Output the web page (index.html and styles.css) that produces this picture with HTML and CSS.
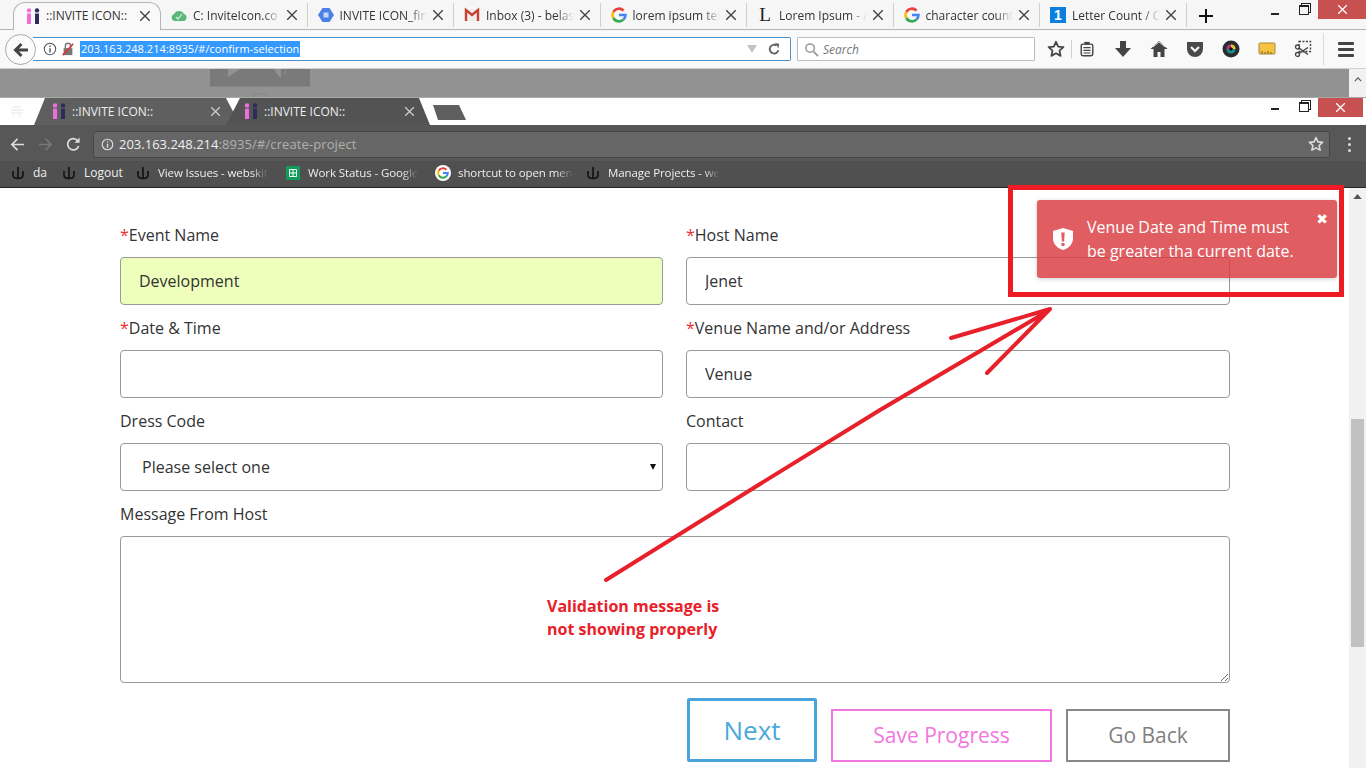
FILE: index.html
```html
<!DOCTYPE html>
<html lang="en">

<head>
    <meta charset="UTF-8">
    <meta name="viewport" content="width=device-width, initial-scale=1.0">
    <title>Validation message bug</title>
    <link rel="stylesheet" href="styles.css">
</head>

<body>
    <!-- shared icons -->
    <svg class="sprites" aria-hidden="true">
        <symbol id="i-ii" viewBox="0 0 16 16">
            <circle cx="4" cy="2.4" r="2.2" fill="#ee6fdc" />
            <rect x="2" y="5.5" width="4" height="10.5" fill="#ee6fdc" />
            <circle cx="12" cy="2.4" r="2.2" fill="#2d2a5c" />
            <rect x="10" y="5.5" width="4" height="10.5" fill="#2d2a5c" />
        </symbol>
        <symbol id="i-x" viewBox="0 0 10 10">
            <path d="M0 0L10 10M10 0L0 10" fill="none" stroke="currentColor" stroke-width="1.4" />
        </symbol>
        <symbol id="i-g" viewBox="0 0 16 16">
            <g fill="none" stroke-width="2.6">
                <path d="M12.6 3.6A6.5 6.5 0 0 0 2.3 5" stroke="#ea4335" />
                <path d="M2.3 5a6.5 6.5 0 0 0 0 6" stroke="#fbbc05" />
                <path d="M2.3 11A6.5 6.5 0 0 0 12.6 12.4" stroke="#34a853" />
                <path d="M12.6 12.4A6.5 6.5 0 0 0 14.5 8H8" stroke="#4285f4" />
            </g>
        </symbol>
        <symbol id="i-star" viewBox="0 0 18 18">
            <path d="M9 1.8l2.2 4.8 5.2.6-3.900 3.500 1.100 5.200L9 13.300l-4.600 2.600 1.100-5.200-3.900-3.500 5.200-.6z" fill="none" stroke="currentColor" stroke-width="1.800" stroke-linejoin="round" />
        </symbol>
        <symbol id="i-mark" viewBox="0 0 14 14">
            <path d="M2 5v4c0 2.500 2 3.500 5 3.500s5-1 5-3.500V5M7 1v11.500" fill="none" stroke="#111" stroke-width="1.600" />
        </symbol>
    </svg>

    <!-- outer browser -->
    <div class="ff-tabs">
        <div class="ff-tab active">
            <svg class="favicon"><use href="#i-ii" /></svg>
            <span class="ff-title">::INVITE ICON::</span>
            <svg class="ff-close"><use href="#i-x" /></svg>
        </div>
        <div class="ff-tab">
            <svg class="favicon" viewBox="0 0 16 16">
                <path d="M4 14a3.500 3.500 0 0 1-1-6.800A5.500 5.500 0 0 1 13 7a3.600 3.600 0 0 1-.5 7z" fill="#5cb87a" />
                <path d="M5 10l2 2 4-5" fill="none" stroke="#d8f0de" stroke-width="1.200" />
            </svg>
            <span class="ff-title">C: InviteIcon.co</span>
            <svg class="ff-close"><use href="#i-x" /></svg>
        </div>
        <div class="ff-tab">
            <svg class="favicon" viewBox="0 0 16 16">
                <path d="M4.500 1h7L16 8l-4.500 7h-7L0 8z" fill="#4a80e8" />
                <rect x="5.500" y="5.500" width="5" height="5" fill="#c5d8fb" />
            </svg>
            <span class="ff-title">INVITE ICON_fin</span>
            <svg class="ff-close"><use href="#i-x" /></svg>
        </div>
        <div class="ff-tab">
            <svg class="favicon" viewBox="0 0 16 16">
                <rect x="1" y="2" width="14" height="12" fill="#eee" />
                <path d="M2 14V3l6 5 6-5v11" fill="none" stroke="#c8402f" stroke-width="2.400" />
            </svg>
            <span class="ff-title">Inbox (3) - belas</span>
            <svg class="ff-close"><use href="#i-x" /></svg>
        </div>
        <div class="ff-tab">
            <svg class="favicon"><use href="#i-g" /></svg>
            <span class="ff-title">lorem ipsum tex</span>
            <svg class="ff-close"><use href="#i-x" /></svg>
        </div>
        <div class="ff-tab">
            <span class="favicon letter">L</span>
            <span class="ff-title">Lorem Ipsum - A</span>
            <svg class="ff-close"><use href="#i-x" /></svg>
        </div>
        <div class="ff-tab">
            <svg class="favicon"><use href="#i-g" /></svg>
            <span class="ff-title">character count</span>
            <svg class="ff-close"><use href="#i-x" /></svg>
        </div>
        <div class="ff-tab">
            <span class="favicon one">1</span>
            <span class="ff-title">Letter Count / C</span>
            <svg class="ff-close"><use href="#i-x" /></svg>
        </div>
        <svg class="ff-plus" viewBox="0 0 16 16">
            <path d="M8 1v14M1 8h14" stroke="#111" stroke-width="2" />
        </svg>
        <div class="win-btns ff-win">
            <span class="win-min"></span>
            <span class="win-max"></span>
            <span class="win-close"><svg class="win-x"><use href="#i-x" /></svg></span>
        </div>
    </div>

    <div class="ff-nav">
        <div class="ff-back">
            <svg viewBox="0 0 18 18" width="18" height="18">
                <path d="M16 9H4M9.500 3L3.500 9l6 6" fill="none" stroke="#444" stroke-width="3" />
            </svg>
        </div>
        <div class="ff-url">
            <svg class="url-icon" viewBox="0 0 16 16">
                <circle cx="8" cy="8" r="6.500" fill="none" stroke="#555" stroke-width="1.200" />
                <path d="M8 7v5M8 4v1.600" stroke="#555" stroke-width="1.600" />
            </svg>
            <svg class="url-icon" viewBox="0 0 16 16">
                <rect x="3" y="7" width="10" height="8" fill="#777" />
                <path d="M5 7V4.500a3 3 0 0 1 6 0V7" fill="none" stroke="#777" stroke-width="1.600" />
                <path d="M2 15L14 2" stroke="#d33" stroke-width="1.800" />
            </svg>
            <span class="url-text">203.163.248.214:8935/#/confirm-selection</span>
            <span class="url-drop"></span>
            <svg class="url-reload" viewBox="0 0 16 16">
                <path d="M13 9.500A5 5 0 1 1 11 4" fill="none" stroke="#666" stroke-width="2.200" />
                <path d="M9 1l5 1-1 5z" fill="#666" />
            </svg>
        </div>
        <div class="ff-search">
            <svg viewBox="0 0 16 16" width="15" height="15">
                <circle cx="6.500" cy="6.500" r="4.500" fill="none" stroke="#999" stroke-width="1.600" />
                <path d="M10 10l5 5" stroke="#999" stroke-width="2" />
            </svg>
            <span>Search</span>
        </div>
        <div class="ff-tools">
            <div class="tool tool-star"><svg width="18" height="18"><use href="#i-star" /></svg></div>
            <div class="tool tool-clip">
                <svg viewBox="0 0 18 18" width="16" height="18">
                    <rect x="2.500" y="3.500" width="13" height="13" rx="2" fill="#f9f9f9" stroke="#444" stroke-width="1.600" />
                    <rect x="6" y="1" width="6" height="3" fill="#444" />
                    <path d="M5 7.500h8M5 10.500h8M5 13.500h8" stroke="#444" stroke-width="1.400" />
                </svg>
            </div>
            <div class="tool">
                <svg viewBox="0 0 18 18" width="18" height="18"><path d="M6 1h6v7h5l-8 9-8-9h5z" fill="#444" /></svg>
            </div>
            <div class="tool">
                <svg viewBox="0 0 18 18" width="18" height="18">
                    <path d="M9 1L0.500 9H3.500v8H7.500v-5h3v5h4V9h3z" fill="#444" />
                    <path d="M3 7l6-5 6 5" fill="none" stroke="#f9f9f9" stroke-width=".8" />
                </svg>
            </div>
            <div class="tool">
                <svg viewBox="0 0 18 18" width="18" height="18">
                    <path d="M1 2h16v7a8 8 0 0 1-16 0z" fill="#4a4a4a" />
                    <path d="M5 7l4 4 4-4" fill="none" stroke="#f9f9f9" stroke-width="2.200" />
                </svg>
            </div>
            <div class="tool">
                <svg viewBox="0 0 18 18" width="18" height="18">
                    <circle cx="9" cy="9" r="8.500" fill="#2b2b2b" />
                    <circle cx="9" cy="9" r="4.500" fill="#1a8f8a" />
                    <path d="M9 4.500a4.500 4.500 0 0 1 4.500 4.500H9z" fill="#e5d22e" />
                    <path d="M4.500 9A4.500 4.500 0 0 1 9 4.500V9z" fill="#c2298e" />
                    <circle cx="9" cy="9" r="1.800" fill="#111" />
                </svg>
            </div>
            <div class="tool">
                <svg viewBox="0 0 18 18" width="18" height="18">
                    <rect x="1" y="3" width="16" height="11" rx="1" fill="#f5c242" stroke="#a98a3a" />
                    <path d="M4 14v-3M7 14v-2M10 14v-3M13 14v-2" stroke="#7a6320" />
                </svg>
            </div>
            <div class="tool">
                <svg viewBox="0 0 18 18" width="18" height="18">
                    <rect x="5" y="1.500" width="11.500" height="10" fill="none" stroke="#444" stroke-width="1.400" stroke-dasharray="2 1.500" />
                    <circle cx="3.500" cy="14.500" r="2" fill="none" stroke="#444" stroke-width="1.300" />
                    <circle cx="3.500" cy="7" r="2" fill="none" stroke="#444" stroke-width="1.300" />
                    <path d="M5 13.500L14 7.500M5 8L14 14.500" stroke="#444" stroke-width="1.500" />
                </svg>
            </div>
            <div class="tool-menu">
                <span></span><span></span><span></span>
            </div>
        </div>
    </div>

    <div class="strip">
        <div class="strip-main">
            <div class="player">
                <svg viewBox="0 0 100 18" width="100" height="18">
                    <path d="M18 0h12l-12 8z" fill="#929292" />
                    <path d="M64 0h7v9l-4-4z" fill="#929292" />
                    <path d="M74 0c2 2 2 4 0 6" fill="none" stroke="#929292" />
                </svg>
            </div>
            <div class="player-grip"></div>
        </div>
        <div class="strip-bar">
            <svg viewBox="0 0 10 6" width="8" height="5"><path d="M1 5l4-4 4 4" fill="none" stroke="#555" stroke-width="1.400" /></svg>
        </div>
    </div>

    <!-- inner browser -->
    <div class="ch-tabs">
        <svg class="ch-logo" viewBox="0 0 14 14">
            <path d="M3 2h8M1 5h12M1 8h12M3 11h2M9 11h2" stroke="#eee" stroke-width="1.500" />
        </svg>
        <div class="ch-tab ch-tab-back">
            <svg class="favicon"><use href="#i-ii" /></svg>
            <span class="ch-title">::INVITE ICON::</span>
            <svg class="ch-close"><use href="#i-x" /></svg>
        </div>
        <div class="ch-tab ch-tab-front">
            <svg class="favicon"><use href="#i-ii" /></svg>
            <span class="ch-title">::INVITE ICON::</span>
            <svg class="ch-close"><use href="#i-x" /></svg>
        </div>
        <div class="ch-new"></div>
        <div class="win-btns ch-win">
            <span class="win-min"></span>
            <span class="win-max"></span>
            <span class="win-close"><svg class="win-x"><use href="#i-x" /></svg></span>
        </div>
    </div>

    <div class="ch-nav">
        <svg class="ch-btn" viewBox="0 0 16 16">
            <path d="M15 8H2M8 2L2 8l6 6" fill="none" stroke="#ddd" stroke-width="1.800" />
        </svg>
        <svg class="ch-btn" viewBox="0 0 16 16">
            <path d="M1 8h13M8 2l6 6-6 6" fill="none" stroke="#777" stroke-width="1.800" />
        </svg>
        <svg class="ch-btn" viewBox="0 0 16 16">
            <path d="M13.500 9.500A6 6 0 1 1 12 3.500" fill="none" stroke="#ddd" stroke-width="1.800" />
            <path d="M9 6h5.500V0.500z" fill="#ddd" />
        </svg>
        <div class="omnibox">
            <svg class="omni-info" viewBox="0 0 16 16">
                <circle cx="8" cy="8" r="6.500" fill="none" stroke="#ddd" stroke-width="1.400" />
                <path d="M8 7v5M8 4v1.600" stroke="#ddd" stroke-width="1.600" />
            </svg>
            <span class="omni-host">203.163.248.214</span><span class="omni-path">:8935/#/create-project</span>
            <svg class="omni-star"><use href="#i-star" /></svg>
        </div>
        <div class="ch-more"><span></span><span></span><span></span></div>
    </div>

    <div class="ch-marks">
        <div class="mark mark-short"><svg class="mark-icon"><use href="#i-mark" /></svg><span>da</span></div>
        <div class="mark mark-logout"><svg class="mark-icon"><use href="#i-mark" /></svg><span>Logout</span></div>
        <div class="mark"><svg class="mark-icon"><use href="#i-mark" /></svg><span class="mark-fade">View Issues - webskit</span></div>
        <div class="mark">
            <svg class="mark-icon" viewBox="0 0 14 14">
                <rect width="14" height="14" rx="1" fill="#0f9d58" />
                <path d="M3.500 3.500h7v7h-7zM3.500 7h7M7 3.500v7" fill="none" stroke="#fff" />
            </svg>
            <span class="mark-fade">Work Status - Google</span>
        </div>
        <div class="mark">
            <span class="mark-g"><svg width="12" height="12"><use href="#i-g" /></svg></span>
            <span class="mark-fade">shortcut to open men</span>
        </div>
        <div class="mark"><svg class="mark-icon"><use href="#i-mark" /></svg><span class="mark-fade">Manage Projects - we</span></div>
    </div>

    <!-- page in the inner browser -->
    <div class="page">
        <main class="content">
            <form class="form-grid">
                <div class="field">
                    <label><em>*</em>Event Name</label>
                    <input class="autofill" type="text" value="Development">
                </div>
                <div class="field">
                    <label><em>*</em>Host Name</label>
                    <input type="text" value="Jenet">
                </div>
                <div class="field">
                    <label><em>*</em>Date &amp; Time</label>
                    <input type="text">
                </div>
                <div class="field">
                    <label><em>*</em>Venue Name and/or Address</label>
                    <input type="text" value="Venue">
                </div>
                <div class="field">
                    <label>Dress Code</label>
                    <div class="select-wrap">
                        <select>
                            <option>Please select one</option>
                        </select>
                    </div>
                </div>
                <div class="field">
                    <label>Contact</label>
                    <input type="text">
                </div>
                <div class="field field-wide">
                    <label>Message From Host</label>
                    <textarea></textarea>
                </div>
            </form>
            <div class="actions">
                <a class="btn btn-next">Next</a>
                <a class="btn btn-save">Save Progress</a>
                <a class="btn btn-back">Go Back</a>
            </div>
        </main>
        <div class="scrollbar">
            <svg viewBox="0 0 10 6" width="9" height="5"><path d="M0 6l5-6 5 6z" fill="#555" /></svg>
            <div class="scroll-thumb"></div>
        </div>
    </div>

    <!-- toast and the red annotations drawn over the shot -->
    <div class="toast">
        <svg class="toast-icon" viewBox="0 0 22 24">
            <path d="M11 1l10 3v7c0 6-4 10-10 12C5 21 1 17 1 11V4z" fill="#fff" />
            <path d="M9.300 5.500h3.400l-.6 9h-2.200z" fill="#e05e62" />
            <circle cx="11" cy="17.500" r="1.800" fill="#e05e62" />
        </svg>
        <p>Venue Date and Time must be greater tha current date.</p>
        <span class="toast-close">&#10006;</span>
    </div>
    <div class="mark-box"></div>
    <svg class="mark-arrow" viewBox="0 0 1366 768">
        <path d="M606 580L760 484L880 410L1048 311M951 338L1050 309L987 373" fill="none" stroke="#e8202a" stroke-width="4" stroke-linecap="round" stroke-linejoin="round" />
    </svg>
    <p class="mark-note">Validation message is<br>not showing properly</p>
</body>

</html>
```
FILE: styles.css
```css
* {
    box-sizing: border-box;
}

html, body {
    margin: 0;
    padding: 0;
    height: 100%;
}

body {
    position: relative;
    width: 1366px;
    height: 768px;
    overflow: hidden;
    font-family: "Open Sans", "Liberation Sans", sans-serif;
    background-color: #fff;
    color: #333;
}

.sprites {
    display: none;
}

.favicon {
    flex: none;
    width: 16px;
    height: 16px;
}

/* outer browser tabs */
.ff-tabs {
    display: flex;
    align-items: flex-end;
    height: 30px;
    padding-left: 13px;
    background-color: #f6f6f6;
    border-bottom: 1px solid #b4b4b4;
}

.ff-tab {
    display: flex;
    align-items: center;
    gap: 6px;
    width: 146.5px;
    height: 24px;
    margin-bottom: 2px;
    padding-left: 10px;
    border-right: 1px solid #cfcfcf;
    font-size: 12px;
    color: #333;
}

.ff-tab.active {
    width: 148px;
    height: 28px;
    margin-bottom: -1px;
    padding-left: 11px;
    padding-bottom: 2px;
    gap: 5px;
    background-color: #f9f9f9;
    border: 1px solid #b4b4b4;
    border-bottom: none;
    border-radius: 12px 12px 0 0;
}

.ff-title {
    flex: 1;
    min-width: 0;
    white-space: nowrap;
    -webkit-mask-image: linear-gradient(to right, #000 80%, transparent 100%);
    mask-image: linear-gradient(to right, #000 80%, transparent 100%);
}

.active .ff-title {
    -webkit-mask-image: none;
    mask-image: none;
}

.ff-close {
    flex: none;
    width: 10px;
    height: 10px;
    margin-right: 10px;
    color: #444;
}

.letter {
    font-family: "Liberation Serif", serif;
    font-size: 19px;
    line-height: 16px;
    color: #222;
    text-align: center;
}

.one {
    font-family: "Liberation Sans", sans-serif;
    font-size: 14px;
    line-height: 16px;
    font-weight: bold;
    color: #fff;
    text-align: center;
    background-color: #0a7fe0;
}

.ff-plus {
    flex: none;
    width: 16px;
    height: 16px;
    margin: 0 0 5px 11px;
}

/* window buttons, both browsers */
.win-btns {
    display: flex;
    align-items: flex-start;
    margin-left: auto;
}

.ff-win {
    align-self: flex-start;
}

.win-min {
    width: 8px;
    height: 2px;
    margin: 13px 20px 0 0;
    background-color: #222;
}

.win-max {
    width: 10px;
    height: 10px;
    margin: 5px 9px 0 0;
    border: 1px solid #222;
    border-top-width: 2px;
    box-shadow: 2px -2px 0 -1px #f6f6f6, 2px -2px 0 0 #222;
}

.win-close {
    display: flex;
    align-items: center;
    justify-content: center;
    width: 48px;
    height: 19px;
    background-color: #c75050;
    color: #fff;
}

.win-x {
    width: 9px;
    height: 9px;
}

/* outer browser toolbar */
.ff-nav {
    display: flex;
    align-items: flex-start;
    height: 39px;
    padding: 7px 0 0 5px;
    background-color: #f9f9f9;
    border-bottom: 1px solid #d0d0d0;
}

.ff-back {
    position: relative;
    z-index: 1;
    display: flex;
    align-items: center;
    justify-content: center;
    flex: none;
    width: 31px;
    height: 31px;
    margin-top: -3px;
    background-color: #fbfbfb;
    border: 1px solid #a8a8a8;
    border-radius: 50%;
}

.ff-url {
    display: flex;
    align-items: center;
    flex: none;
    width: 758px;
    height: 24px;
    margin-left: -3px;
    padding-left: 10px;
    background-color: #fff;
    border: 1px solid #4a90c9;
    border-left: none;
    border-radius: 0 2px 2px 0;
}

.url-icon {
    flex: none;
    width: 14px;
    height: 14px;
    margin-right: 4px;
}

.url-text {
    margin-left: 1px;
    padding: 0 1px;
    font-size: 11px;
    letter-spacing: 0.05px;
    line-height: 16px;
    color: #fff;
    background-color: #3399ff;
    white-space: nowrap;
}

.url-drop {
    width: 0;
    height: 0;
    margin-left: auto;
    margin-right: 2px;
    border-left: 5px solid transparent;
    border-right: 5px solid transparent;
    border-top: 8px solid #c4c4c4;
}

.url-reload {
    flex: none;
    width: 14px;
    height: 14px;
    margin: 0 9px 0 8px;
}

.ff-search {
    display: flex;
    align-items: center;
    gap: 4px;
    flex: none;
    width: 238px;
    height: 24px;
    margin-left: 6px;
    padding-left: 6px;
    background-color: #fff;
    border: 1px solid #bcbcbc;
    border-radius: 1px;
    font-size: 12px;
    font-style: italic;
    color: #777;
}

.ff-tools {
    display: flex;
    align-items: center;
    height: 24px;
    margin-left: 5.5px;
}

.tool {
    display: flex;
    align-items: center;
    justify-content: center;
    flex: none;
    width: 36px;
}

.tool-star {
    width: 31px;
    color: #444;
    border-right: 1px solid #d0d0d0;
}

.tool-clip {
    width: 31px;
    margin-right: 2.5px;
}

.tool-menu {
    display: flex;
    flex-direction: column;
    justify-content: center;
    align-items: center;
    gap: 3px;
    flex: none;
    width: 44px;
    height: 32px;
    margin-left: 2px;
    border-left: 1px solid #dcdcdc;
}

.tool-menu span {
    width: 16px;
    height: 3px;
    border-radius: 1px;
    background-color: #444;
}

/* dimmed page between the two browsers */
.strip {
    display: flex;
    height: 28px;
    background-color: #929292;
}

.strip-main {
    flex: 1;
    padding-left: 210px;
}

.player {
    display: flex;
    width: 100px;
    height: 18px;
    background-color: #7a7a7a;
    border-bottom: 1px solid #868686;
}

.player-grip {
    width: 13px;
    height: 4px;
    margin: 6px 0 0 43px;
    border: 1px solid #888;
    border-bottom: none;
}

.strip-bar {
    display: flex;
    justify-content: center;
    flex: none;
    width: 17px;
    padding-top: 8px;
    background-color: #f1f1f1;
}

/* inner browser */
.ch-tabs {
    display: flex;
    align-items: flex-end;
    height: 28px;
    padding-left: 34px;
    background-color: #fff;
    border-top: 1px solid #a8a8a8;
}

.ch-logo {
    flex: none;
    width: 14px;
    height: 14px;
    margin: 0 10px 6px -24px;
}

.ch-tab {
    display: flex;
    align-items: center;
    height: 27px;
    padding-bottom: 1px;
    font-size: 12px;
    color: #eee;
    white-space: nowrap;
}

.ch-tab-back {
    width: 206px;
    padding-left: 17px;
    background-color: #5f5f5f;
    clip-path: polygon(11px 0, 192px 0, 100% 100%, 0 100%);
}

.ch-tab-front {
    position: relative;
    width: 204px;
    margin-left: -14px;
    padding-left: 17px;
    background-color: #535353;
    clip-path: polygon(14px 0, 193px 0, 100% 100%, 0 100%);
}

.ch-title {
    margin-left: 5px;
}

.ch-close {
    width: 9px;
    height: 9px;
    margin-left: auto;
    color: #ccc;
}

.ch-tab-back .ch-close {
    margin-right: 20px;
}

.ch-tab-front .ch-close {
    margin-right: 16px;
}

.ch-new {
    align-self: flex-start;
    width: 33px;
    height: 15px;
    margin: 7px 0 0 3px;
    background-color: #5f5f5f;
    clip-path: polygon(0 0, 26px 0, 100% 100%, 5px 100%);
}

.ch-win {
    align-self: flex-start;
    margin-right: 3px;
}

.ch-win .win-min {
    margin-top: 10px;
}

.ch-win .win-max {
    margin-top: 4px;
    box-shadow: 2px -2px 0 -1px #fff, 2px -2px 0 0 #222;
}

.ch-win .win-close {
    width: 45px;
}

.ch-nav {
    display: flex;
    align-items: center;
    height: 36px;
    padding: 2px 0 0 10px;
    background-color: #575757;
}

.ch-btn {
    flex: none;
    width: 15px;
    height: 15px;
    margin-right: 13px;
}

.omnibox {
    display: flex;
    align-items: center;
    flex: none;
    width: 1237px;
    height: 27px;
    margin-left: -1px;
    padding-left: 7px;
    background-color: #666;
    border: 1px solid #474747;
    border-radius: 3px;
    font-size: 13px;
    white-space: nowrap;
}

.omni-info {
    width: 13px;
    height: 13px;
    margin-right: 5px;
}

.omni-host {
    color: #f0f0f0;
}

.omni-path {
    letter-spacing: 0.1px;
    color: #b0b0b0;
}

.omni-star {
    width: 16px;
    height: 16px;
    margin-left: auto;
    margin-right: 5px;
    color: #ddd;
}

.ch-more {
    display: flex;
    flex-direction: column;
    align-items: center;
    gap: 3px;
    margin-left: 18px;
}

.ch-more span {
    width: 3px;
    height: 3px;
    border-radius: 50%;
    background-color: #ddd;
}

.ch-marks {
    display: flex;
    align-items: center;
    height: 27px;
    padding: 0 0 3px 11px;
    background-color: #505050;
    border-bottom: 1px solid #222;
    font-size: 12px;
    color: #eee;
}

.mark {
    display: flex;
    align-items: center;
    gap: 8px;
    width: 150px;
    white-space: nowrap;
}

.mark-short {
    width: 51px;
}

.mark-logout {
    width: 74px;
}

.mark-icon {
    flex: none;
    width: 14px;
    height: 14px;
}

.mark-g {
    display: flex;
    align-items: center;
    justify-content: center;
    flex: none;
    width: 16px;
    height: 16px;
    margin: 0 -1px;
    background-color: #fff;
    border-radius: 50%;
}

.mark-fade {
    font-size: 11.5px;
    letter-spacing: -0.1px;
    -webkit-mask-image: linear-gradient(to right, #000 85%, transparent 100%);
    mask-image: linear-gradient(to right, #000 85%, transparent 100%);
}

/* form page */
.page {
    display: flex;
    height: 580px;
    overflow: hidden;
}

.content {
    flex: 1;
    padding: 36px 119px 0 120px;
}

.form-grid {
    display: grid;
    grid-template-columns: 543px 544px;
    column-gap: 23px;
}

.field {
    display: flex;
    flex-direction: column;
    height: 93px;
}

.field-wide {
    grid-column: 1 / 3;
    height: 180px;
}

.field label {
    height: 22px;
    margin-bottom: 11px;
    font-size: 16px;
    line-height: 22px;
    color: #333;
}

.field em {
    font-style: normal;
    color: #e8302f;
}

.field input,
.field select,
.field textarea {
    width: 100%;
    height: 48px;
    padding: 0 18px;
    background-color: #fff;
    border: 1px solid #999;
    border-radius: 4px;
    font-family: inherit;
    font-size: 16px;
    color: #333;
}

.select-wrap {
    position: relative;
}

.select-wrap::after {
    content: "";
    position: absolute;
    top: 21px;
    right: 7px;
    border-left: 3px solid transparent;
    border-right: 3px solid transparent;
    border-top: 6px solid #111;
}

.field select {
    display: block;
    padding-left: 21px;
    -webkit-appearance: none;
    appearance: none;
}

.field textarea {
    flex: none;
    height: 147px;
    padding: 10px 18px;
}

.field input.autofill {
    background-color: #eeffbb;
}

.actions {
    display: flex;
    justify-content: flex-end;
    align-items: flex-end;
    gap: 14px;
    margin-top: 15px;
}

.btn {
    display: flex;
    align-items: center;
    justify-content: center;
    height: 53px;
    padding-bottom: 1px;
    background-color: #fff;
    border: 2px solid;
    font-size: 21px;
}

.btn-next {
    width: 130px;
    height: 64px;
    border: 3px solid #4ba3dc;
    border-radius: 2px;
    font-size: 26px;
    color: #4ba9d9;
}

.btn-save {
    width: 221px;
    border-color: #f176e0;
    color: #f176e0;
}

.btn-back {
    width: 164px;
    border-color: #888;
    color: #808080;
}

.scrollbar {
    flex: none;
    width: 17px;
    padding-top: 6px;
    background-color: #f1f1f1;
}

.scrollbar svg {
    display: block;
    margin: 0 auto;
}

.scroll-thumb {
    width: 13px;
    height: 228px;
    margin: 220px 0 0 2px;
    background-color: #c1c1c1;
}

/* things lying over the shot */
.toast {
    position: absolute;
    left: 1037px;
    top: 200px;
    display: flex;
    align-items: center;
    width: 300px;
    height: 78px;
    padding-left: 15px;
    background-color: rgba(217, 58, 64, 0.82);
    border-radius: 3px;
    box-shadow: 0 1px 4px rgba(0, 0, 0, 0.2);
    color: #fff;
}

.toast p {
    flex: none;
    width: 215px;
    margin: 0 0 0 13px;
    font-size: 16px;
    line-height: 24px;
}

.toast-icon {
    flex: none;
    width: 22px;
    height: 24px;
}

.toast-close {
    position: absolute;
    top: 11px;
    right: 9px;
    font-family: "DejaVu Sans", sans-serif;
    font-size: 14px;
    line-height: 16px;
}

.mark-box {
    position: absolute;
    left: 1008px;
    top: 185px;
    width: 336px;
    height: 112px;
    border: 5px solid #ed1c24;
}

.mark-arrow {
    position: absolute;
    left: 0;
    top: 0;
    width: 1366px;
    height: 768px;
    pointer-events: none;
}

.mark-note {
    position: absolute;
    left: 547px;
    top: 595px;
    margin: 0;
    font-size: 16px;
    line-height: 23px;
    font-weight: bold;
    color: #e8202a;
    white-space: nowrap;
}
```
